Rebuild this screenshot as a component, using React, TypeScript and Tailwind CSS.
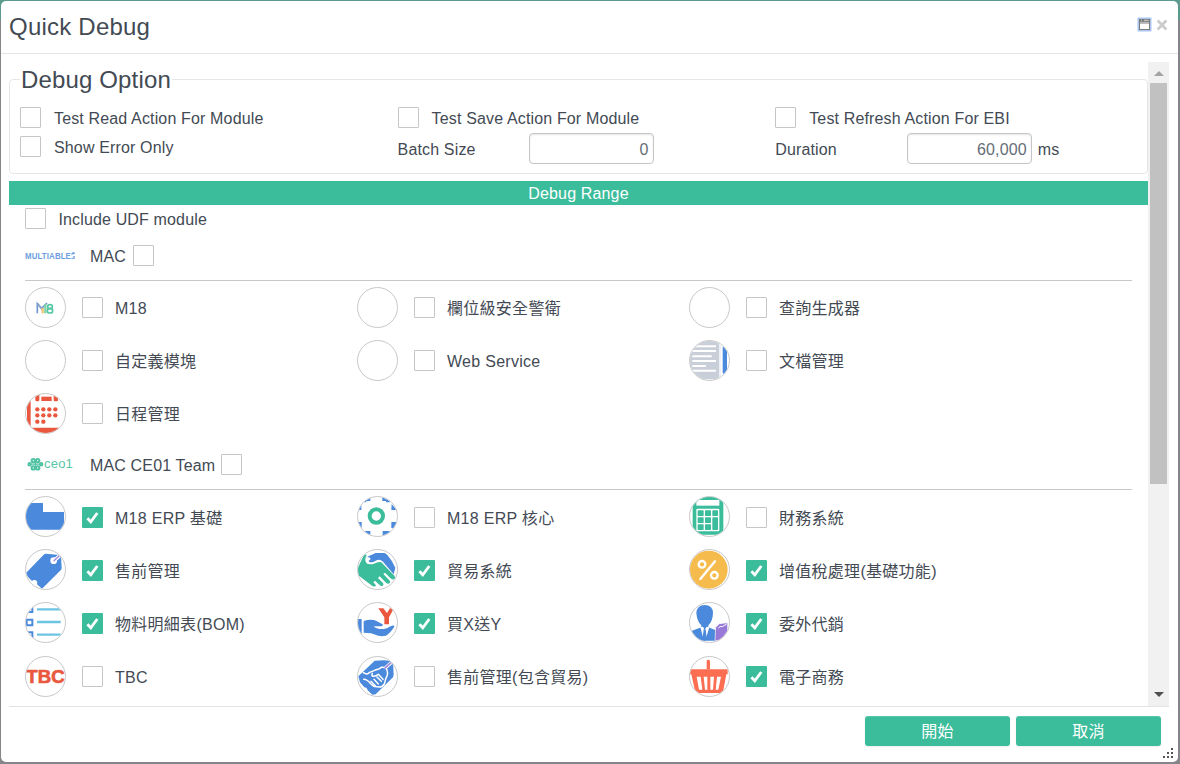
import React from "react";

const BLUE = "#4a89dc";
const GREEN = "#3bbc9b";
const RED = "#e9573f";

type IconName =
  | "none" | "m18" | "calendar" | "document" | "folder" | "gear" | "calculator" | "tag" | "handshake"
  | "percent" | "list" | "gift" | "agent" | "tbc" | "taghands" | "basket";

const drawings: Record<IconName, React.ReactNode> = {
  none: null,
  m18: (
    <g fill="none">
      <path d="M37 79V50l13 14 16-16" stroke="#6f97cf" strokeWidth="5" />
      <path d="M38 50l14 18" stroke="#8ba5c9" strokeWidth="5" />
      <path d="M53 79V63" stroke="#f3c679" strokeWidth="7" />
      <path d="M61 79V52" stroke="#7fd3a8" strokeWidth="7" />
      <ellipse cx="75" cy="59" rx="7" ry="6" stroke="#55c7a4" strokeWidth="5" />
      <ellipse cx="75" cy="71" rx="8" ry="7" stroke="#55c7a4" strokeWidth="5" />
    </g>
  ),
  calendar: (
    <g fill={RED}>
      <path d="M6 0h21v12h-6q-4 0-4 6v86h106v19H6z" />
      <rect x="31" y="0" width="12" height="25" rx="4" />
      <rect x="49" y="11" width="31" height="13" />
      <rect x="86" y="0" width="13" height="25" rx="4" />
      {[37, 55, 73, 91].map((x) => (
        <g key={x}>
          <circle cx={x} cy="49" r="6.5" />
          <circle cx={x} cy="67" r="6.5" />
          {x < 60 && <circle cx={x} cy="86" r="6.5" />}
        </g>
      ))}
    </g>
  ),
  document: (
    <g>
      <rect width="91" height="118" fill="#c9cfd9" />
      <rect x="91" width="9" height="123" fill="#fff" />
      <rect x="91" width="4" height="118" fill="#e8ebf0" />
      <path d="M101 98V22q6-5 13 5v70q-3 8-6 10z" fill={BLUE} />
      <path d="M10 19h71M10 33h71M10 49h58M10 63h71M10 78h41M10 92h71" stroke="#fff" strokeWidth="6" />
    </g>
  ),
  folder: <path d="M0 21h54v27h63v53H0z" fill={BLUE} />,
  gear: (
    <g>
      <circle cx="58" cy="60" r="20" fill="none" stroke={GREEN} strokeWidth="12" />
      <g fill={BLUE}>
        <path d="M19 15L40 3v12H28v4h-9zM4 28l9-2v16H3z" />
        <path d="M76 3l22 12v4H87v-4H76zM104 24l15 18h-16z" />
        <path d="M3 78h11v18L4 90zM20 105h20v15l-20-8z" />
        <path d="M119 78h-16v18h10zM98 105H77v15l21-8z" />
      </g>
    </g>
  ),
  calculator: (
    <g>
      <path d="M11 0h92v116H11z" fill={GREEN} />
      <rect x="22" y="12" width="69" height="17" fill="#fff" />
      <rect x="22" y="38" width="69" height="68" rx="3" fill="#fff" />
      <g fill={GREEN}>
        <rect x="26" y="43" width="18" height="17" rx="2" /><rect x="48" y="43" width="18" height="17" rx="2" /><rect x="70" y="43" width="17" height="17" rx="2" />
        <rect x="26" y="64" width="18" height="17" rx="2" /><rect x="48" y="64" width="18" height="17" rx="2" /><rect x="70" y="64" width="17" height="38" rx="2" />
        <rect x="26" y="85" width="18" height="17" rx="2" /><rect x="48" y="85" width="18" height="17" rx="2" />
      </g>
    </g>
  ),
  tag: (
    <g>
      <path d="M3 72L56 17q3-3 7-3l42 4q3 0 3 4l2 34q0 5-3 8L51 119 36 106q3-8-3-12-8-3-12 2L9 84z" fill={BLUE} />
      <circle cx="86" cy="35" r="10" fill="#fff" />
      <path d="M85 37l20-18" stroke="#fff" strokeWidth="11" />
      <path d="M86 36l17-16" stroke="#a287dd" strokeWidth="4" />
    </g>
  ),
  handshake: (
    <g>
      <path d="M31 23L56 12h26q5 1 9 6 17 20 24 38l-5 20-32-38q-10-10-22-3-12 8-20 3-3-3 3-6 6-5-8-9z" fill={BLUE} />
      <path d="M0 62L18 24q5-10 11-6-6 12-3 20 4 11 25 6 14-8 22-4l39 40q6 9-2 11-5 1-11-5L84 71l-5 4 19 20q3 6-1 8-5 3-10-2L68 82l-5 5 15 15q3 5-1 8-5 2-9-2L54 95l-5 5 8 9q-2 6-11 2L0 76z" fill={GREEN} />
    </g>
  ),
  percent: (
    <g>
      <circle cx="59" cy="62" r="57" fill="#f6bb4d" />
      <g fill="none" stroke="#fff" strokeWidth="7">
        <circle cx="39" cy="46" r="10" />
        <circle cx="76" cy="79" r="10" />
        <path d="M78 37L34 90" strokeLinecap="round" />
      </g>
    </g>
  ),
  list: (
    <g fill="none">
      <path d="M9 30h13V12M5 53h17v17H5zM9 91h13v18" stroke={BLUE} strokeWidth="6" />
      <path d="M36 22h71M36 60h71M36 98h71" stroke="#6dc3e2" strokeWidth="7" />
    </g>
  ),
  gift: (
    <g>
      <path d="M64 19h15l11 14 9-14h12L96 46v21H82V46z" fill={RED} />
      <path d="M0 51h14v50H0zM20 57q22-7 37-1 12 6 20 11 2 4-4 6H50q6 8 18 8 20 1 28-6 9-6 15-4 3 2-2 8-12 17-22 22-18 4-32-3Q46 92 20 92z" fill={BLUE} />
    </g>
  ),
  agent: (
    <g>
      <path d="M47 9q24 0 25 24-1 26-14 37v6l23 9v31H9V86l28-10v-6Q24 59 22 33 24 9 47 9z" fill={BLUE} />
      <path d="M34 76l8-2 5 9 6-9 8 2-9 29-5-23-5 23z" fill="#fff" />
      <path d="M44 82h6l3 27-6 8-6-8z" fill={BLUE} />
      <path d="M80 76l11-11 25-3v26l-21 28H78z" fill="#9879d7" stroke="#fff" strokeWidth="2" />
      <path d="M88 78q5-7 12-4l13-8" stroke="#fff" strokeWidth="3" fill="none" />
    </g>
  ),
  tbc: (
    <text
      x="4" y="81" textLength="115" lengthAdjust="spacingAndGlyphs" fontSize="54" fontWeight="700"
      fill={RED} stroke={RED} strokeWidth="2" fontFamily="Liberation Sans, sans-serif"
    >
      TBC
    </text>
  ),
  taghands: (
    <g>
      <path d="M4 61L53 14l28-1q18 1 27 5l2 38-2 8-52 51-10 1-14-13q-2-9-10-9L9 79z" fill={BLUE} />
      <g fill="none" stroke="#fff" strokeWidth="4.5" strokeLinejoin="round" strokeLinecap="round">
        <path d="M19 50q12 8 19-1l15-6q16-4 20-9 12-2 16 6 6 16-2 26l-5 18q-8 12-20 8-12 2-20-8-12-14-22-14" />
        <path d="M46 52q-4 9 4 9 8 0 14-6l14 15" />
        <path d="M42 76l13 13M51 70l13 14M60 63l13 13" />
      </g>
      <path d="M84 37l20-18" stroke="#fff" strokeWidth="10" />
      <path d="M83 37l19-17" stroke="#a287dd" strokeWidth="5" />
    </g>
  ),
  basket: (
    <g fill="#fc6e51">
      <path d="M53 14q5-5 10 0v26H53z" />
      <path d="M0 40h116v15h-4l-9 48q-1 8-8 8H26q-7 0-8-7L7 55H0z" />
      <g fill="#fff">
        <path d="M23 62h12l5 39H30zM44 62h11v39h-7zM64 62h11l-3 39h-8zM84 62h12l-8 39h-8z" />
      </g>
    </g>
  ),
};

function ModuleIcon({ name }: { name: IconName }) {
  return (
    <div className="size-[41px] shrink-0 overflow-hidden rounded-full border border-[#c8c8c8]">
      <svg viewBox="3 3 117 117" className="block size-full">{drawings[name]}</svg>
    </div>
  );
}

function Check({ on = false }: { on?: boolean }) {
  return on ? (
    <span className="flex size-[21px] shrink-0 items-center justify-center rounded-[1px] bg-[#3bbc9b]">
      <svg viewBox="0 0 21 21" className="size-full">
        <path d="M5.4 11.2l3.4 3.6L15.3 6" fill="none" stroke="#fff" strokeWidth="2.8" />
      </svg>
    </span>
  ) : (
    <span className="size-[21px] shrink-0 rounded-[1px] border border-[#c6c6c6] bg-white" />
  );
}

type Module = [IconName, string, boolean?];

const base: Module[] = [
  ["m18", "M18"], ["none", "欄位級安全警衛"], ["none", "查詢生成器"],
  ["none", "自定義模塊"], ["none", "Web Service"], ["document", "文檔管理"],
  ["calendar", "日程管理"],
];

const team: Module[] = [
  ["folder", "M18 ERP 基礎", true], ["gear", "M18 ERP 核心"], ["calculator", "財務系統"],
  ["tag", "售前管理", true], ["handshake", "貿易系統", true], ["percent", "增值稅處理(基礎功能)", true],
  ["list", "物料明細表(BOM)", true], ["gift", "買X送Y", true], ["agent", "委外代銷", true],
  ["tbc", "TBC"], ["taghands", "售前管理(包含貿易)"], ["basket", "電子商務", true],
];

function BaseGrid() {
  return (
    <div className="grid grid-cols-[332px_332px_332px] auto-rows-[53px]">
      {base.map(([icon, label, on]) => (
        <div key={label} className="flex items-center">
          <ModuleIcon name={icon} />
          <span className="ml-4 flex"><Check on={on} /></span>
          <span className="ml-3 pt-[3px] leading-5 tracking-[0.28px]">{label}</span>
        </div>
      ))}
    </div>
  );
}

function TeamGrid() {
  return (
    <div className="grid grid-cols-[332px_332px_332px] auto-rows-[53.2px]">
      {team.map(([icon, label, on]) => (
        <div key={label} className="flex items-center">
          <ModuleIcon name={icon} />
          <span className="ml-4 flex pt-[1.4px]"><Check on={on} /></span>
          <span className="ml-3 pt-[4px] leading-5 tracking-[0.28px]">{label}</span>
        </div>
      ))}
    </div>
  );
}

function NumberBox({ value }: { value: string }) {
  return (
    <div className="flex h-[31px] w-[125px] items-center justify-end rounded-[4px] border border-[#c6c6c6] pt-[3px] pr-1 text-[#656d78] shadow-[inset_0_1px_2px_rgba(0,0,0,0.1)]">
      {value}
    </div>
  );
}

export default function App() {
  return (
    <div className="h-[764px] w-[1180px] overflow-hidden bg-[linear-gradient(#5d9a8e_0_20px,#85858a_20px)] pt-px pl-px font-['Liberation_Sans','Noto_Sans_CJK_TC',sans-serif] text-[16px] leading-5 tracking-[0.15px] text-[#434a54]">
      <div className="relative flex h-[761px] w-[1177px] flex-col rounded-[5px] bg-white">
        <header className="flex h-[53px] shrink-0 items-center border-b border-[#e5e5e5] pr-[10px] pl-2">
          <h1 className="flex-1 text-[24px] leading-8 tracking-[0.22px]">Quick Debug</h1>
          <svg viewBox="0 0 15 15" className="mb-[5px] h-[15px] w-[15px]">
            <rect x="0.5" y="0.5" width="14" height="14" rx="1" fill="#a9c6f2" />
            <rect x="2" y="2" width="11" height="11" fill="#7b7b7b" />
            <rect x="3" y="6.5" width="9" height="5.5" fill="#fff" />
            <path d="M3 5.3h9" stroke="#d8d8d8" strokeWidth="0.8" />
            <path d="M4 3.3h1M7 3.3h4.5" stroke="#ddd" strokeWidth="0.9" />
          </svg>
          <svg viewBox="0 0 12 12" className="mb-[5px] ml-1 size-3">
            <path d="M1.6 1.6l8.8 8.8M10.4 1.6l-8.8 8.8" stroke="#ccc" strokeWidth="2.8" />
          </svg>
        </header>

        <main className="mt-2 ml-2 flex h-[645px] w-[1160px] shrink-0 overflow-hidden border-b border-[#e3e3e3]">
          <div className="w-[1139px] shrink-0">
            <fieldset className="h-[112px] rounded-[4px] border border-[#e6e6e6] px-[10px]">
              <legend className="h-[34px] px-[1px] pt-px text-[24px] leading-[34px] tracking-[0.15px]">Debug Option</legend>
              <div className="grid grid-cols-[377.6px_377.6px_1fr] pt-[11px]">
                <div>
                  <div className="flex h-[21px] items-center gap-[13px]"><Check /><span className="pt-[3px]">Test Read Action For Module</span></div>
                  <div className="mt-2 flex h-[21px] items-center gap-[13px]"><Check /><span className="pt-[3px]">Show Error Only</span></div>
                </div>
                <div>
                  <div className="flex h-[21px] items-center gap-[13px]"><Check /><span className="pt-[3px]">Test Save Action For Module</span></div>
                  <div className="mt-[5px] flex items-center"><span className="w-[131px] pt-[3px]">Batch Size</span><NumberBox value="0" /></div>
                </div>
                <div>
                  <div className="flex h-[21px] items-center gap-[13px]"><Check /><span className="pt-[3px]">Test Refresh Action For EBI</span></div>
                  <div className="mt-[5px] flex items-center"><span className="w-[131.6px] pt-[3px]">Duration</span><NumberBox value="60,000" /><span className="ml-[6px] pt-[3px]">ms</span></div>
                </div>
              </div>
            </fieldset>

            <div className="mt-[7px] h-6 bg-[#3bbc9b] pt-[3px] text-center text-white">Debug Range</div>

            <div className="px-4">
              <div className="flex h-[27px] items-center"><Check /><span className="ml-[12.4px] pt-[2px]">Include UDF module</span></div>

              <section>
                <div className="flex h-[48px] items-center">
                  <svg viewBox="0 0 50 10" className="h-[10px] w-[50px]">
                    <text x="0" y="7.6" textLength="46" lengthAdjust="spacingAndGlyphs" fontSize="8.5" fontWeight="700" fill="#6d9fe0">MULTIABLE</text>
                    <path d="M46.5 3.5l2-2M49 1.2v2M46.5 7.5h1.3M49 5v3" stroke="#6d9fe0" strokeWidth="1.4" />
                  </svg>
                  <span className="mr-[6.5px] ml-[15px] pt-px">MAC</span>
                  <span className="pb-[2px]"><span className="flex"><Check /></span></span>
                </div>
                <div className="h-px bg-[#c8c8c8]" />
                <BaseGrid />
              </section>

              <section>
                <div className="flex h-[49px] items-center">
                  <svg viewBox="0 0 50 16" className="mb-px h-4 w-[50px]">
                    <g fill="none" stroke="#4fc2a2" strokeWidth="2">
                      <circle cx="8.3" cy="4.6" r="1.7" /><circle cx="12.7" cy="4.6" r="1.7" />
                      <circle cx="8.3" cy="11.9" r="1.7" /><circle cx="12.7" cy="11.9" r="1.7" />
                      <circle cx="4.6" cy="8.2" r="1.2" /><circle cx="16.2" cy="8.2" r="1.2" />
                      <path d="M6 8.2h9M10.5 4v9" strokeWidth="1.2" />
                    </g>
                    <text x="19" y="12" textLength="29" lengthAdjust="spacingAndGlyphs" fontSize="12" fill="#58c5a7">ceo1</text>
                  </svg>
                  <span className="mr-[6px] ml-[15px] pt-[2px]">MAC CE01 Team</span><Check />
                </div>
                <div className="h-px bg-[#c8c8c8]" />
                <TeamGrid />
              </section>
            </div>
          </div>

          <div className="flex w-[21px] shrink-0 flex-col items-center bg-[#f1f1f1]">
            <div className="flex h-[21px] items-center pt-[2px]">
              <svg viewBox="0 0 10 5" className="h-[5px] w-[10px]"><path d="M0 5l5-5 5 5z" fill="#a3a3a3" /></svg>
            </div>
            <div className="h-[401px] w-[17px] bg-[#c1c1c1]" />
            <svg viewBox="0 0 10 5" className="mt-auto mb-[9px] h-[5px] w-[10px]"><path d="M0 0h10L5 5z" fill="#505050" /></svg>
          </div>
        </main>

        <footer className="flex justify-end gap-[6px] pt-[9px] pr-[17px]">
          <button className="h-[30px] w-[145px] rounded-[3px] bg-[#3bbc9b] pt-px text-white shadow-[inset_0_1px_0_rgba(255,255,255,0.15),0_1px_2px_rgba(0,0,0,0.08)]">開始</button>
          <button className="h-[30px] w-[145px] rounded-[3px] bg-[#3bbc9b] pt-px text-white shadow-[inset_0_1px_0_rgba(255,255,255,0.15),0_1px_2px_rgba(0,0,0,0.08)]">取消</button>
        </footer>

        <svg viewBox="0 0 12 10" className="absolute right-[4px] bottom-[4px] h-[10px] w-3">
          <path d="M9 0h2v2H9zM5 4h2v2H5zM9 4h2v2H9zM1 8h2v2H1zM5 8h2v2H5zM9 8h2v2H9z" fill="#555" />
        </svg>
      </div>
    </div>
  );
}
